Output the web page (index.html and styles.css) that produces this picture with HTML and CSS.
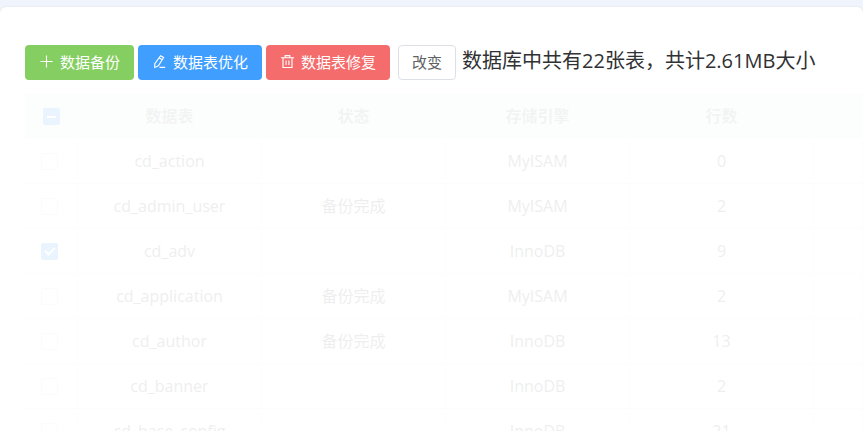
FILE: index.html
```html
<!DOCTYPE html>
<html lang="zh-CN">
<head>
  <meta charset="UTF-8">
  <title>数据库备份</title>
  <meta name="viewport" content="width=device-width, initial-scale=1.0">
  <link rel="stylesheet" href="styles.css">
</head>
<body>

<div class="card">
  <div class="toolbar">
    <div class="btn-group">
      <button type="button" class="btn btn-success">
        <svg class="icon" viewBox="0 0 16 16"><path d="M8 1.5v13M1.5 8h13"/></svg>
        数据备份
      </button>
      <button type="button" class="btn btn-primary">
        <svg class="icon" viewBox="0 0 16 16"><path d="M9.2 1.8l3.2 1.9-5.6 8.9-3.9 1.7.1-3.9zM7.8 4.2l3.2 1.9M8 14.3h6"/></svg>
        数据表优化
      </button>
      <button type="button" class="btn btn-danger">
        <svg class="icon" viewBox="0 0 16 16"><path d="M1 4h14M3.2 4v10.4h9.6V4M5.5 4V1.7h5V4M6.5 6.8v5M9.5 6.8v5"/></svg>
        数据表修复
      </button>
    </div>
    <button type="button" class="btn btn-default">改变</button>
    <span class="summary">数据库中共有22张表，共计2.61MB大小</span>
  </div>

  <table class="data-table loading">
    <colgroup>
      <col class="col-check">
      <col class="col-data">
      <col class="col-data">
      <col class="col-data">
      <col class="col-data">
      <col>
    </colgroup>
    <thead>
      <tr>
        <th><input type="checkbox" class="check partial" aria-label="全选"></th>
        <th>数据表</th>
        <th>状态</th>
        <th>存储引擎</th>
        <th>行数</th>
        <th></th>
      </tr>
    </thead>
    <tbody>
      <tr>
        <td><input type="checkbox" class="check" aria-label="cd_action"></td>
        <td>cd_action</td><td></td><td>MyISAM</td><td>0</td><td></td>
      </tr>
      <tr>
        <td><input type="checkbox" class="check" aria-label="cd_admin_user"></td>
        <td>cd_admin_user</td><td>备份完成</td><td>MyISAM</td><td>2</td><td></td>
      </tr>
      <tr>
        <td><input type="checkbox" class="check" aria-label="cd_adv" checked></td>
        <td>cd_adv</td><td></td><td>InnoDB</td><td>9</td><td></td>
      </tr>
      <tr>
        <td><input type="checkbox" class="check" aria-label="cd_application"></td>
        <td>cd_application</td><td>备份完成</td><td>MyISAM</td><td>2</td><td></td>
      </tr>
      <tr>
        <td><input type="checkbox" class="check" aria-label="cd_author"></td>
        <td>cd_author</td><td>备份完成</td><td>InnoDB</td><td>13</td><td></td>
      </tr>
      <tr>
        <td><input type="checkbox" class="check" aria-label="cd_banner"></td>
        <td>cd_banner</td><td></td><td>InnoDB</td><td>2</td><td></td>
      </tr>
      <tr>
        <td><input type="checkbox" class="check" aria-label="cd_base_config"></td>
        <td>cd_base_config</td><td></td><td>InnoDB</td><td>21</td><td></td>
      </tr>
    </tbody>
  </table>
</div>

</body>
</html>
```
FILE: styles.css
```css
body {
  margin: 0;
  height: 100vh;
  overflow: hidden;
  background: #f0f4fd;
  font-family: "Open Sans", "Noto Sans CJK SC", sans-serif;
  color: #303133;
}

.card {
  margin-top: 7px;
  padding: 38px 0 0 25px;
  min-height: 100vh;
  background: #fff;
  border-radius: 6px;
  box-shadow: 0 0 2px rgba(0, 0, 0, 0.1);
}

.toolbar {
  display: flex;
  align-items: center;
  margin-bottom: 14px;
}

.btn-group {
  display: flex;
  gap: 4px;
  margin-right: 8px;
}

.btn {
  display: flex;
  align-items: center;
  gap: 6px;
  height: 35px;
  padding: 0 13px 2px;
  border: 1px solid transparent;
  border-radius: 4px;
  color: #fff;
  font-family: inherit;
  font-size: 15px;
  font-weight: 400;
  white-space: nowrap;
  cursor: pointer;
}

.btn-success {
  background: #85ce61;
}

.btn-primary {
  background: #409eff;
}

.btn-danger {
  background: #f56c6c;
}

.btn-default {
  background: #fff;
  border-color: #dcdfe6;
  color: #606266;
}

.icon {
  width: 15px;
  height: 15px;
  fill: none;
  stroke: currentColor;
  stroke-width: 1.2;
}

.summary {
  margin-left: 6px;
  padding-bottom: 3px;
  font-size: 20px;
  line-height: 28px;
  font-weight: 400;
  white-space: nowrap;
}

.data-table {
  width: 100%;
  table-layout: fixed;
  border-collapse: separate;
  border-spacing: 0;
  font-size: 16px;
  color: #606266;
}

.loading {
  opacity: 0.1;
}

.col-check {
  width: 53px;
}

.col-data {
  width: 184px;
}

.data-table th,
.data-table td {
  box-sizing: border-box;
  height: 45px;
  padding: 0;
  border-bottom: 1px solid #ebeef5;
  border-right: 1px solid #ebeef5;
  text-align: center;
  line-height: 24px;
}

.data-table th {
  background: #ebfaf8;
  color: #909399;
  font-weight: 700;
}

.check {
  appearance: none;
  display: block;
  box-sizing: border-box;
  width: 17px;
  height: 17px;
  margin: 0 0 0 16px;
  border: 1px solid #dcdfe6;
  border-radius: 2px;
  background: #fff;
}

.data-table th .check {
  margin-left: 18px;
}

.check:checked,
.check.partial {
  background: #409eff;
  border-color: #409eff;
}

.check:checked::after {
  content: "";
  display: block;
  width: 4px;
  height: 8px;
  margin: 1px 0 0 5px;
  border: solid #fff;
  border-width: 0 2px 2px 0;
  transform: rotate(45deg);
}

.check.partial::after {
  content: "";
  display: block;
  width: 9px;
  height: 2px;
  margin: 7px 0 0 3px;
  background: #fff;
}
```
